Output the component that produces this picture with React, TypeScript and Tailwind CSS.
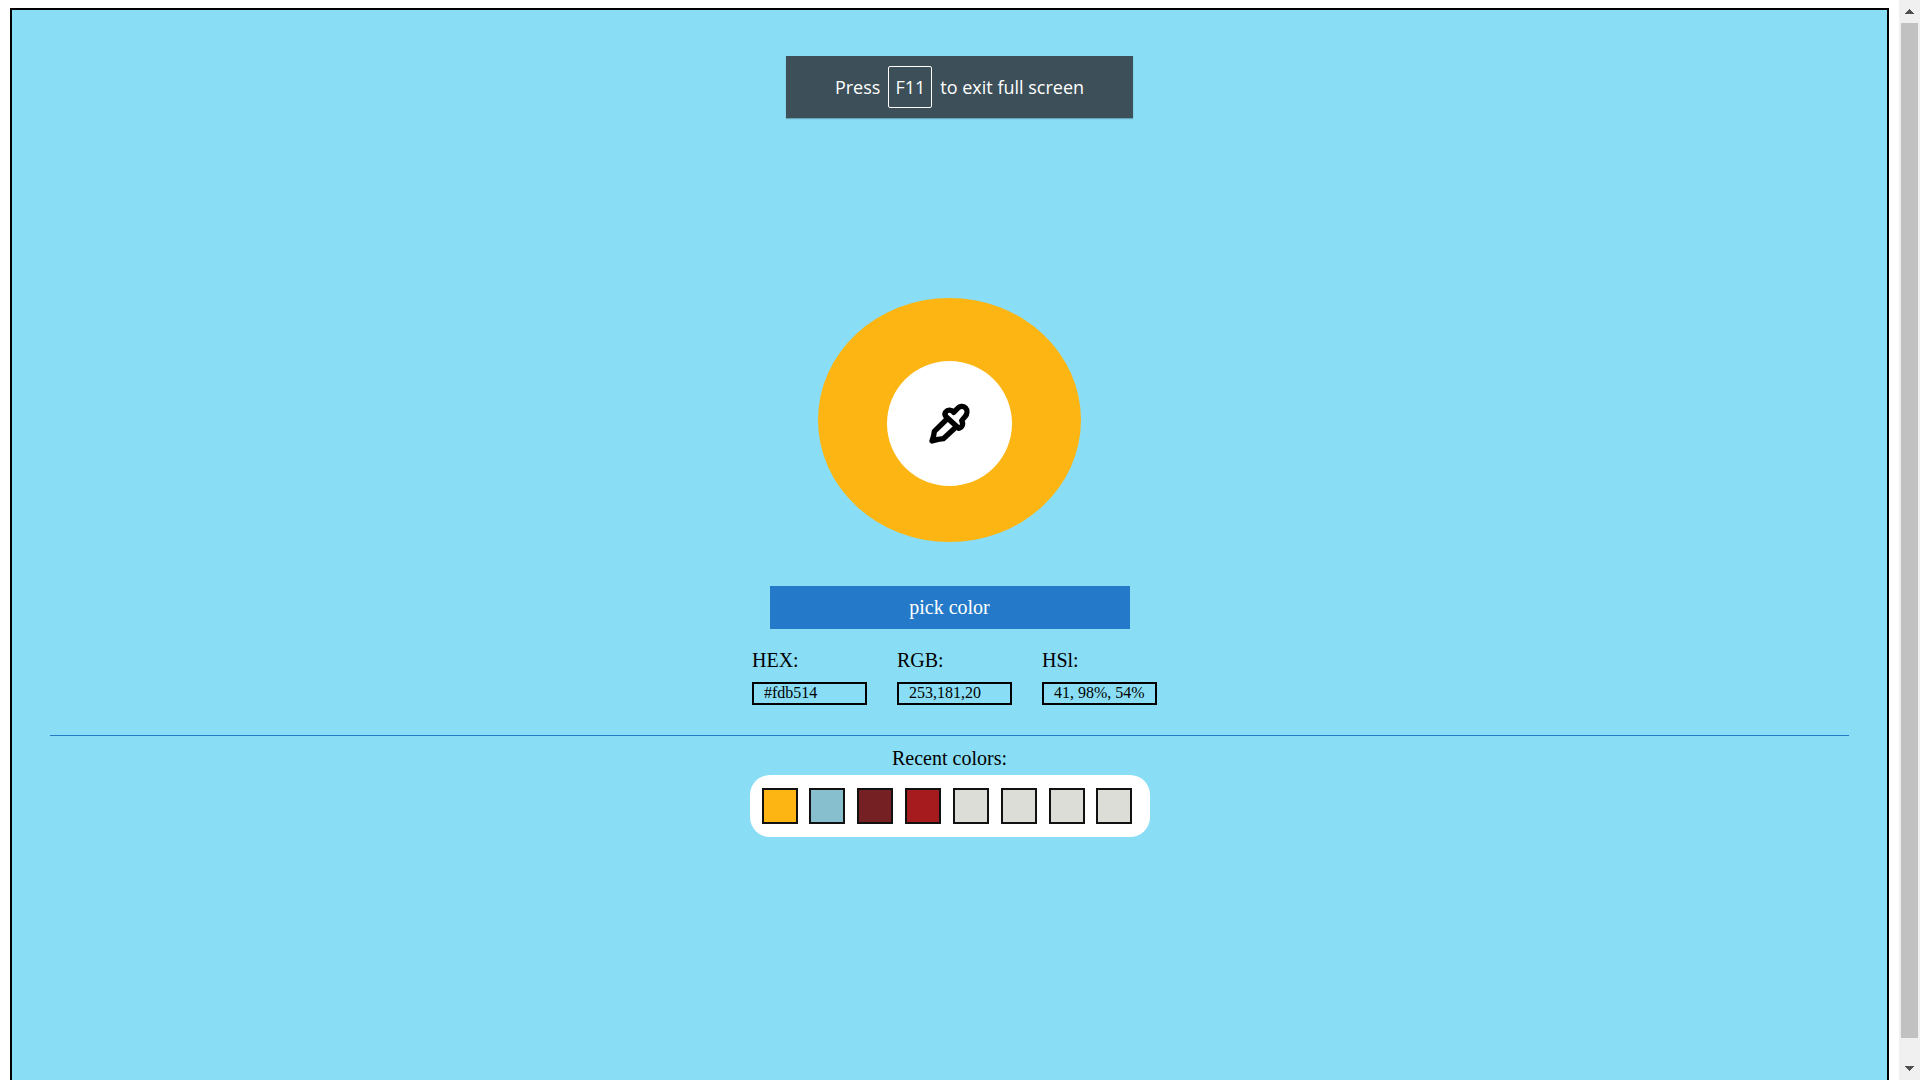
import React from "react";

const values = [
  { id: "hex", label: "HEX:", value: "#fdb514" },
  { id: "rgb", label: "RGB:", value: "253,181,20" },
  { id: "hsl", label: "HSl:", value: "41, 98%, 54%" },
];

const recent = [
  { name: "Amber", color: "bg-[#fdb514]" },
  { name: "Pale teal", color: "bg-[#87bfce]" },
  { name: "Maroon", color: "bg-[#752022]" },
  { name: "Red", color: "bg-[#a61c1e]" },
  { name: "Empty 1", color: "bg-[#dcddd7]" },
  { name: "Empty 2", color: "bg-[#dcddd7]" },
  { name: "Empty 3", color: "bg-[#dcddd7]" },
  { name: "Empty 4", color: "bg-[#dcddd7]" },
];

function Dropper() {
  return (
    <svg
      viewBox="88 68 126 126"
      className="size-[42px]"
      fill="none"
      stroke="black"
      strokeWidth="16"
      strokeLinecap="round"
      strokeLinejoin="round"
      aria-hidden="true"
    >
      <path d="M141 111L177 144C188 142 192 130 186 121L196 109C203 101 204 89 197 82C190 76 180 78 174 84L162 96C155 88 144 87 138 95C134 101 136 106 141 111Z" />
      <path d="M139 119L104 153L102 166L97 182L115 177L131 175L165 144" />
    </svg>
  );
}

function FullScreenNotice() {
  return (
    <div className="absolute inset-x-0 top-14 flex justify-center pr-px">
      <div className="flex h-[62px] w-[347px] items-center justify-center bg-[#3d4f58] font-['Open_Sans',sans-serif] text-lg text-white shadow-[0_1px_1px_rgba(0,0,0,0.25)]">
        <span>Press</span>
        <kbd className="mx-2 flex h-[42px] w-11 items-center justify-center rounded-xs border border-white font-['Open_Sans',sans-serif] text-lg">
          F11
        </kbd>
        <span>to exit full screen</span>
      </div>
    </div>
  );
}

function ScrollBar() {
  return (
    <div className="flex w-[21px] shrink-0 flex-col items-center bg-[#f0f0f0]" aria-hidden="true">
      <div className="flex h-[23px] items-center justify-center">
        <svg viewBox="0 0 9 5" className="h-[5px] w-[9px] fill-[#505050]" shapeRendering="crispEdges">
          <path d="M0 5L4.500 0L9 5Z" />
        </svg>
      </div>
      <div className="w-[17px] flex-1 bg-[#c1c1c1]" />
      <div className="flex h-[42px] items-center justify-center pt-[18px]">
        <svg viewBox="0 0 9 5" className="h-[5px] w-[9px] fill-[#505050]" shapeRendering="crispEdges">
          <path d="M0 0L4.500 5L9 0Z" />
        </svg>
      </div>
    </div>
  );
}

export default function App() {
  return (
    <div className="relative flex h-screen overflow-hidden bg-white font-['Liberation_Serif',serif] text-xl text-black">
      <main className="mx-2.5 mt-2 flex flex-1 flex-col items-center border-2 border-b-0 border-black bg-[#89def5] px-[38px] pt-72">
        <div className="flex h-[244px] w-[263px] items-center justify-center rounded-[50%] bg-[#fdb514] pt-[7px]">
          <div className="flex size-[125px] items-center justify-center rounded-full bg-white">
            <Dropper />
          </div>
        </div>

        <button type="button" className="mt-11 h-[43px] w-[360px] bg-[#247ac8] pb-0.5 text-white">
          pick color
        </button>

        <div className="mt-[17px] flex gap-[30px] pl-2.5">
          {values.map((v) => (
            <div key={v.id} className="flex w-[115px] flex-col gap-2">
              <label htmlFor={v.id} className="leading-7">
                {v.label}
              </label>
              <input
                id={v.id}
                readOnly
                defaultValue={v.value}
                className="h-[23px] w-full border-2 border-black bg-transparent pb-0.5 pl-2.5 text-base leading-4"
              />
            </div>
          ))}
        </div>

        <hr className="mt-[30px] w-full border-[#247ac8]" />

        <h2 className="mt-2 leading-7">Recent colors:</h2>
        <div className="mt-[3px] flex h-[62px] w-[400px] items-center justify-between rounded-[20px] bg-white pr-[17px] pl-3">
          {recent.map((s) => (
            <button
              key={s.name}
              type="button"
              aria-label={s.name}
              className={`size-9 border-2 border-[#111111] ${s.color}`}
            />
          ))}
        </div>
      </main>

      <ScrollBar />
      <FullScreenNotice />
    </div>
  );
}
